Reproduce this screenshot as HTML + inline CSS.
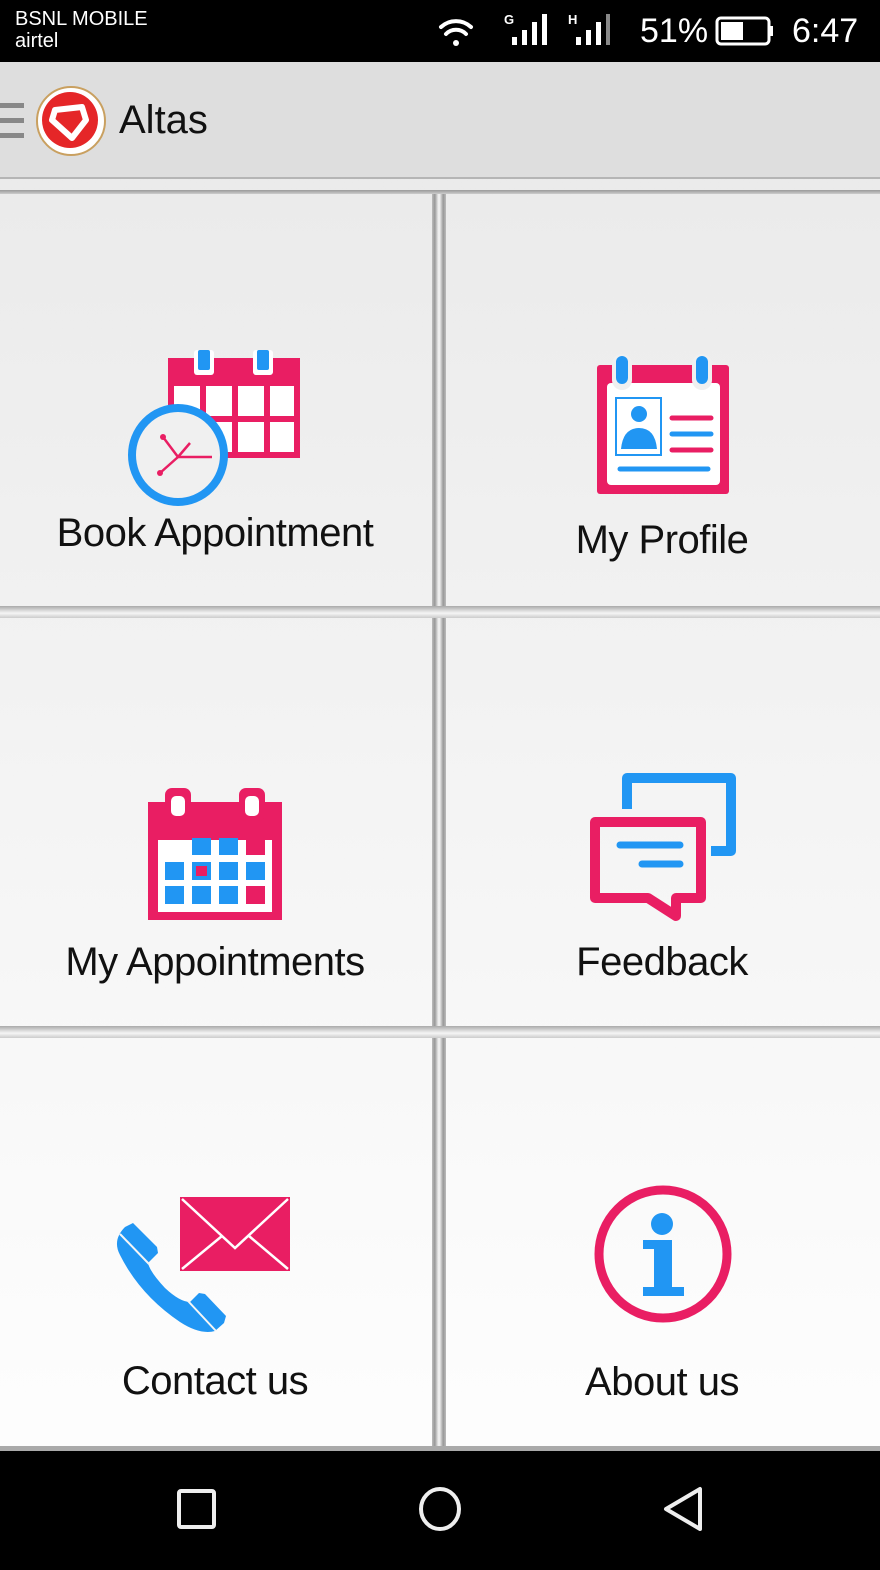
<!DOCTYPE html>
<html><head><meta charset="utf-8"><style>
*{margin:0;padding:0;box-sizing:border-box}
body{width:880px;height:1570px;position:relative;overflow:hidden;font-family:"Liberation Sans",sans-serif;background:linear-gradient(#e8e8e8,#fdfdfd 1400px)}
.t{position:absolute;font-size:40px;color:#111;text-align:center;width:440px;letter-spacing:-0.5px}
</style></head><body>
<div style="position:absolute;left:0;top:0;width:880px;height:62px;background:#000;color:#fff">
<div style="position:absolute;left:15px;top:8px;font-size:20px;line-height:22px">BSNL MOBILE<br>airtel</div>
<div style="position:absolute;left:640px;top:12px;font-size:34px">51%</div>
<div style="position:absolute;left:792px;top:12px;font-size:34px">6:47</div>
<svg width="880" height="62" style="position:absolute;left:0;top:0">
<g fill="none" stroke="#fff" stroke-width="4" stroke-linecap="round"><path d="M441 27a22 22 0 0 1 30 0"/><path d="M446 34a14 14 0 0 1 20 0"/></g>
<circle cx="456" cy="43" r="3" fill="#fff"/>
<text x="504" y="24" fill="#fff" font-size="13" font-weight="bold">G</text>
<rect x="512" y="37" width="5" height="8" fill="#fff"/><rect x="522" y="30" width="5" height="15" fill="#fff"/><rect x="532" y="22" width="5" height="23" fill="#fff"/><rect x="542" y="14" width="5" height="31" fill="#fff"/>
<text x="568" y="24" fill="#fff" font-size="13" font-weight="bold">H</text>
<rect x="576" y="37" width="5" height="8" fill="#fff"/><rect x="586" y="30" width="5" height="15" fill="#fff"/><rect x="596" y="22" width="5" height="23" fill="#fff"/><rect x="606" y="14" width="4" height="31" fill="#888"/>
<rect x="717" y="18" width="52" height="26" rx="4" fill="none" stroke="#fff" stroke-width="3"/><rect x="721" y="22" width="22" height="18" fill="#fff"/><rect x="770" y="26" width="3" height="10" fill="#fff"/>
</svg></div>
<div style="position:absolute;left:0;top:62px;width:880px;height:117px;background:#dedede;border-bottom:2px solid #b5b5b5"></div>
<svg width="130" height="117" style="position:absolute;left:0;top:62px">
<rect x="0" y="41" width="24" height="5" fill="#888"/><rect x="0" y="56" width="24" height="5" fill="#888"/><rect x="0" y="71" width="24" height="5" fill="#888"/>
<circle cx="71" cy="59" r="34" fill="#fff" stroke="#c9a060" stroke-width="2"/>
<circle cx="70" cy="58" r="28" fill="#e52628"/>
<path d="M55 48 L82 45 L86 58 L72 76 L52 58 Z" fill="none" stroke="#fff" stroke-width="6" stroke-linejoin="round"/>
</svg>
<div style="position:absolute;left:119px;top:98px;font-size:40px;color:#111">Altas</div>
<div style="position:absolute;left:432px;top:192px;width:14px;height:1258px;background:linear-gradient(90deg,#bbb,#999 20%,#eee 45%,#eee 55%,#999 80%,#bbb)"></div>
<div style="position:absolute;left:0;top:606px;width:880px;height:12px;background:linear-gradient(#aaa,#ddd 40%,#f5f5f5 60%,#ccc)"></div>
<div style="position:absolute;left:0;top:1026px;width:880px;height:12px;background:linear-gradient(#aaa,#ddd 40%,#f5f5f5 60%,#ccc)"></div>
<div style="position:absolute;left:0;top:190px;width:880px;height:4px;background:linear-gradient(#999,#ccc)"></div>
<div style="position:absolute;left:0;top:1446px;width:880px;height:5px;background:#aaa"></div>
<div class="t" style="left:-5px;top:511px">Book Appointment</div>
<div class="t" style="left:442px;top:518px">My Profile</div>
<div class="t" style="left:-5px;top:940px">My Appointments</div>
<div class="t" style="left:442px;top:940px">Feedback</div>
<div class="t" style="left:-5px;top:1359px">Contact us</div>
<div class="t" style="left:442px;top:1360px">About us</div>
<svg width="880" height="1570" style="position:absolute;left:0;top:0">
<rect x="168" y="358" width="132" height="100" fill="#e91e63"/>
<g fill="#fff"><rect x="174" y="386" width="26" height="30"/><rect x="206" y="386" width="26" height="30"/><rect x="238" y="386" width="26" height="30"/><rect x="270" y="386" width="24" height="30"/>
<rect x="206" y="422" width="26" height="30"/><rect x="238" y="422" width="26" height="30"/><rect x="270" y="422" width="24" height="30"/>
<rect x="194" y="350" width="20" height="25" rx="3"/><rect x="253" y="350" width="20" height="25" rx="3"/></g>
<rect x="198" y="350" width="12" height="20" rx="2" fill="#2196f3"/><rect x="257" y="350" width="12" height="20" rx="2" fill="#2196f3"/>
<ellipse cx="178" cy="455" rx="46" ry="47" fill="#f0f0f0" stroke="#2196f3" stroke-width="8"/>
<g stroke="#e91e63" stroke-width="2.5" fill="none"><path d="M163 437 L178 457 L160 473"/><path d="M178 457 L190 443"/><path d="M178 457 L212 457"/></g>
<circle cx="160" cy="473" r="3" fill="#e91e63"/><circle cx="163" cy="437" r="3" fill="#e91e63"/>
<rect x="597" y="365" width="132" height="129" rx="3" fill="#e91e63"/>
<rect x="607" y="383" width="113" height="102" rx="4" fill="#fff"/>
<rect x="612" y="354" width="20" height="36" rx="10" fill="#f0f0f0"/><rect x="692" y="354" width="20" height="36" rx="10" fill="#f0f0f0"/>
<rect x="616" y="356" width="12" height="28" rx="6" fill="#2196f3"/><rect x="696" y="356" width="12" height="28" rx="6" fill="#2196f3"/>
<rect x="616" y="398" width="45" height="57" fill="none" stroke="#2196f3" stroke-width="2"/>
<circle cx="639" cy="414" r="8" fill="#2196f3"/><path d="M621 449 Q623 428 639 428 Q655 428 657 449Z" fill="#2196f3"/>
<g stroke-linecap="round" stroke-width="5"><line x1="672" y1="418" x2="711" y2="418" stroke="#e91e63"/><line x1="672" y1="434" x2="711" y2="434" stroke="#2196f3"/><line x1="672" y1="450" x2="711" y2="450" stroke="#e91e63"/><line x1="620" y1="469" x2="708" y2="469" stroke="#2196f3"/></g>
<rect x="148" y="802" width="134" height="118" fill="#e91e63"/>
<rect x="158" y="840" width="114" height="72" fill="#fff"/>
<rect x="165" y="788" width="26" height="33" rx="7" fill="#e91e63"/><rect x="239" y="788" width="26" height="33" rx="7" fill="#e91e63"/>
<rect x="171" y="796" width="14" height="20" rx="5" fill="#fff"/><rect x="245" y="796" width="14" height="20" rx="5" fill="#fff"/>
<g fill="#2196f3"><rect x="192" y="838" width="19" height="17"/><rect x="219" y="838" width="19" height="17"/><rect x="165" y="862" width="19" height="18"/><rect x="192" y="862" width="19" height="18"/><rect x="219" y="862" width="19" height="18"/><rect x="246" y="862" width="19" height="18"/><rect x="165" y="886" width="19" height="18"/><rect x="192" y="886" width="19" height="18"/><rect x="219" y="886" width="19" height="18"/></g>
<g fill="#e91e63"><rect x="246" y="838" width="19" height="17"/><rect x="246" y="886" width="19" height="18"/><rect x="196" y="866" width="11" height="10"/></g>
<path d="M627 809 V778 H731 V851 H711" fill="none" stroke="#2196f3" stroke-width="10" stroke-linejoin="round"/>
<path d="M595 822 H701 V898 H676 V916 L648 898 H595 Z" fill="none" stroke="#e91e63" stroke-width="10" stroke-linejoin="round"/>
<g stroke="#2196f3" stroke-width="7" stroke-linecap="round"><line x1="620" y1="845" x2="680" y2="845"/><line x1="642" y1="864" x2="680" y2="864"/></g>
<rect x="180" y="1197" width="110" height="74" fill="#e91e63"/>
<g stroke="#fff" stroke-width="2.5" fill="none"><path d="M182 1199 L235 1248 L288 1199"/><path d="M182 1269 L222 1236"/><path d="M288 1269 L249 1236"/></g>
<path d="M125 1227 L133 1223 L157 1247 L158 1253 L148 1263 Q150 1272 165 1288 Q180 1302 190 1302 L199 1293 L205 1294 L226 1316 L224 1323 L215 1331 Q200 1335 180 1322 Q140 1295 120 1255 Q112 1240 125 1227 Z" fill="#2196f3"/>
<g stroke="#f6f6f6" stroke-width="2"><line x1="120" y1="1234" x2="149" y2="1264"/><line x1="188" y1="1301" x2="216" y2="1331"/></g>
<circle cx="663" cy="1254" r="64" fill="none" stroke="#e91e63" stroke-width="9"/>
<circle cx="662" cy="1224" r="11" fill="#2196f3"/>
<path d="M643 1240 H672 V1287 H684 V1296 H643 V1287 H654 V1249 H643Z" fill="#2196f3"/>
</svg>
<div style="position:absolute;left:0;top:1451px;width:880px;height:119px;background:#000"></div>
<svg width="880" height="119" style="position:absolute;left:0;top:1451px">
<rect x="179" y="40" width="35" height="36" rx="2" fill="none" stroke="#eee" stroke-width="4"/>
<ellipse cx="440" cy="58" rx="19" ry="20" fill="none" stroke="#eee" stroke-width="4"/>
<path d="M700 38 L700 78 L666 58 Z" fill="none" stroke="#eee" stroke-width="4" stroke-linejoin="round"/>
</svg>
</body></html>
